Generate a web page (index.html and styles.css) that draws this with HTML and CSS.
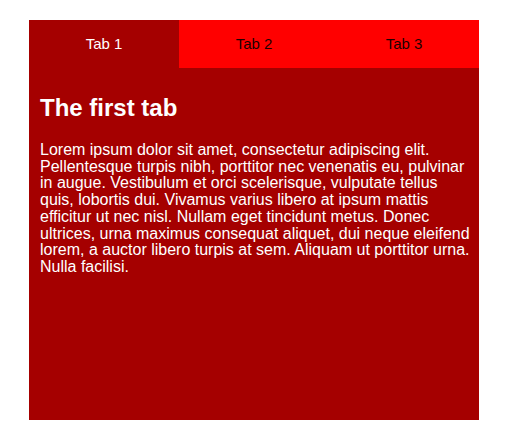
FILE: index.html
```html
<!DOCTYPE html>
<html lang="en">
<head>
<meta charset="utf-8">
<title>Tabs</title>
<link rel="stylesheet" href="styles.css">
</head>
<body>
<div class="tabs">
  <div class="tab-bar">
    <div class="tab active">Tab 1</div>
    <div class="tab">Tab 2</div>
    <div class="tab">Tab 3</div>
  </div>
  <div class="panel">
    <h2 class="panel-title">The first tab</h2>
    <p class="panel-text">Lorem ipsum dolor sit amet, consectetur adipiscing elit. Pellentesque turpis nibh, porttitor nec venenatis eu, pulvinar in augue. Vestibulum et orci scelerisque, vulputate tellus quis, lobortis dui. Vivamus varius libero at ipsum mattis efficitur ut nec nisl. Nullam eget tincidunt metus. Donec ultrices, urna maximus consequat aliquet, dui neque eleifend lorem, a auctor libero turpis at sem. Aliquam ut porttitor urna. Nulla facilisi.</p>
  </div>
</div>
</body>
</html>
```
FILE: styles.css
```css
html, body {
  margin: 0;
  padding: 0;
  background: #ffffff;
}
body {
  font-family: "Liberation Sans", Arial, Helvetica, sans-serif;
  padding: 20px 0 0 29px;
}
.tabs {
  width: 450px;
  height: 400px;
  background: #a50000;
  display: flex;
  flex-direction: column;
}
.tab-bar {
  display: flex;
  height: 48px;
  background: #ff0000;
}
.tab {
  flex: 1;
  display: flex;
  align-items: center;
  justify-content: center;
  font-size: 15px;
  color: #1c0000;
  padding-bottom: 2px;
}
.tab.active {
  background: #a50000;
  color: #ffffff;
}
.panel {
  padding: 6px 9px 10px 11px;
  color: #ffffff;
}
.panel-title {
  font-size: 24px;
  font-weight: bold;
  margin: 20px 0 20px;
}
.panel-text {
  font-size: 16px;
  line-height: 16.7px;
  margin: 0;
}
```
